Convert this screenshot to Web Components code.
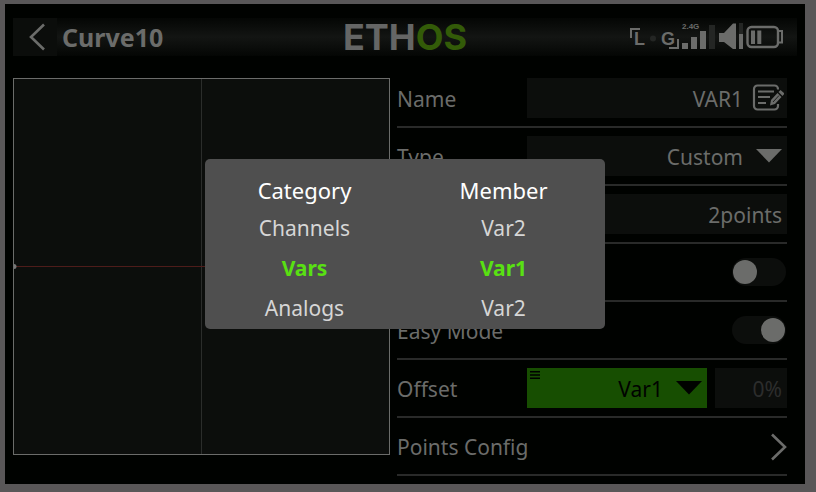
<!DOCTYPE html>
<html lang="en">
<head>
<meta charset="utf-8">
<title>Curve10</title>
<style>
    body {
        margin: 0;
        min-height: 100vh;
        display: flex;
        background: #595758;
        --text: #6b6c6a;
        --line: #292a29;
        --field: #0c0e0c;
        --green: #174e01;
        font: 21px/28px "Noto Sans", "Open Sans", sans-serif;
        color: var(--text);
    }
</style>
</head>
<body>
<ethos-screen>
    <ethos-header slot="header" title-text="Curve10"></ethos-header>
    <curve-chart slot="chart"></curve-chart>
    <text-row label="Name" value="VAR1" icon></text-row>
    <select-row label="Type" value="Custom"></select-row>
    <text-row hint="Points count" value="2points"></text-row>
    <switch-row hint="Smooth"></switch-row>
    <switch-row label="Easy Mode" checked></switch-row>
    <offset-row label="Offset" value="Var1" percent="0%"></offset-row>
    <link-row label="Points Config"></link-row>
    <source-dialog slot="dialog">
        <picker-column heading="Category" items="Channels,Vars,Analogs" selected="1"></picker-column>
        <picker-column heading="Member" items="Var2,Var1,Var2" selected="1"></picker-column>
    </source-dialog>
</ethos-screen>

<script>
    class EthosScreen extends HTMLElement {
        constructor() {
            super();
            this.attachShadow({ mode: "open" });
            this.shadowRoot.innerHTML = `
            <style>
                :host {
                    flex: 1;
                    min-width: 0;
                    position: relative;
                    display: block;
                    margin: 4px 11px 8px 5px;
                    background: #000200;
                }

                main {
                    display: grid;
                    grid-template-columns: minmax(0, 377fr) minmax(0, 390fr);
                    align-items: start;
                    gap: 7px;
                    padding: 0 18px 8px 8px;
                }

                .chart {
                    padding-top: 8px;
                }
            </style>
            <slot name="header"></slot>
            <main>
                <div class="chart"><slot name="chart"></slot></div>
                <div class="rows"><slot></slot></div>
            </main>
            <slot name="dialog"></slot>
        `;
        }
    }

    class EthosHeader extends HTMLElement {
        constructor() {
            super();
            this.attachShadow({ mode: "open" });
            this.shadowRoot.innerHTML = `
            <style>
                :host {
                    display: block;
                    padding: 14px 8px;
                }

                header {
                    display: grid;
                    grid-template-columns: 1fr auto 1fr;
                    align-items: center;
                    height: 38px;
                    background: linear-gradient(#040604, #131513 50%, #040604);
                }

                .left {
                    display: flex;
                    align-items: center;
                    gap: 5px;
                }

                button {
                    width: 44px;
                    height: 38px;
                    padding: 0;
                    border: none;
                    background: #0b0d0b;
                    color: inherit;
                }

                svg {
                    display: block;
                }

                button svg {
                    margin-left: 15px;
                }

                h1 {
                    margin: 0;
                    font-size: 25px;
                    font-weight: 700;
                }

                .logo {
                    font: 700 36px/38px Inter, sans-serif;
                    color: #656665;
                }

                .logo span {
                    color: #335b08;
                }

                .status {
                    justify-self: end;
                    padding-right: 9px;
                }
            </style>
            <header>
                <div class="left">
                    <button aria-label="Back">
                        <svg width="18" height="28" viewBox="0 0 18 28" fill="none" stroke="currentColor" stroke-width="2.6">
                            <path d="M16 1.500L3 14l13 12.500"/>
                        </svg>
                    </button>
                    <h1></h1>
                </div>
                <div class="logo">ETH<span>OS</span></div>
                <svg class="status" width="160" height="36" viewBox="0 0 160 36" fill="#6b6c6a" font-family="Liberation Sans, sans-serif" font-weight="700">
                    <path d="M3 19v-9h9M41 29h9v-9" fill="none" stroke="#6b6c6a" stroke-width="2"/>
                    <text x="6" y="26" font-size="18">L</text>
                    <circle cx="25" cy="19.500" r="3" fill="#242624"/>
                    <text x="33" y="26" font-size="18">G</text>
                    <text x="54" y="10" font-size="8">2.4G</text>
                    <path d="M54 24h6v6h-6zM63 18h6v12h-6zM72 12h6v18h-6z"/>
                    <path d="M81 6h6v24h-6zM111 4h4v11h-4z" fill="#242624"/>
                    <path d="M91 14h5l9-9.500h3V30h-3l-9-7h-5zM111 15h4v15h-4z"/>
                    <rect x="119.500" y="8" width="30.500" height="20" rx="4" fill="none" stroke="#6b6c6a" stroke-width="2.400"/>
                    <path d="M150 12h4v11.500h-4" fill="none" stroke="#6b6c6a" stroke-width="2"/>
                    <path d="M123 11.500h4V25h-4zM129.300 11.500h4V25h-4z"/>
                </svg>
            </header>
        `;
        }

        connectedCallback() {
            this.shadowRoot.querySelector("h1").textContent = this.getAttribute("title-text");
        }
    }

    class CurveChart extends HTMLElement {
        constructor() {
            super();
            this.attachShadow({ mode: "open" });
            this.shadowRoot.innerHTML = `
            <style>
                :host {
                    display: block;
                    box-sizing: border-box;
                    aspect-ratio: 1;
                    border: 1px solid #6b6c6a;
                    background: var(--field);
                }

                svg {
                    display: block;
                    width: 100%;
                    height: 100%;
                }
            </style>
            <svg viewBox="0 0 375 375">
                <path d="M187.500 0v375" stroke="#2b2d2b"/>
                <path d="M0 187.500h375" stroke="#4e1c1a"/>
                <circle cx="0" cy="187.500" r="2.500" fill="#777"/>
            </svg>
        `;
        }
    }

    // Shared look of one settings line: label on the left, control on the right
    class SettingRow extends HTMLElement {
        constructor() {
            super();
            this.attachShadow({ mode: "open" });
        }

        connectedCallback() {
            this.shadowRoot.innerHTML = `
            <style>
                :host {
                    display: block;
                    padding: 8px 0;
                    border-bottom: 2px solid var(--line);
                }

                .row {
                    display: grid;
                    grid-template-columns: minmax(0, 1fr) minmax(0, 2fr);
                    align-items: center;
                    height: 40px;
                }

                .control {
                    position: relative;
                    display: flex;
                    gap: 8px;
                    justify-content: flex-end;
                }

                label {
                    padding-top: 2px;
                    white-space: nowrap;
                }

                input, select, button {
                    box-sizing: border-box;
                    margin: 0;
                    border: none;
                    border-radius: 0;
                    font: inherit;
                    color: inherit;
                }

                input[type="text"], select {
                    appearance: none;
                    flex: 1;
                    width: 100%;
                    min-width: 0;
                    height: 40px;
                    padding: 2px 5px 0;
                    background: var(--field);
                    text-align: right;
                    text-align-last: right;
                }

                .with-icon {
                    padding-right: 44px !important;
                }

                svg {
                    display: block;
                    pointer-events: none;
                }

                .icon {
                    position: absolute;
                    right: 3px;
                    top: 6px;
                }

                .arrow {
                    position: absolute;
                    right: 5px;
                    top: 13px;
                }
            </style>
            ${this.render()}
        `;
        }

        row(control) {
            const name = this.getAttribute("label");
            const label = name ? `<label for="field">${name}</label>` : "<span></span>";
            return `<div class="row">${label}<div class="control">${control}</div></div>`;
        }

        get hint() {
            const hint = this.getAttribute("hint");
            return hint ? `aria-label="${hint}"` : "";
        }

        get arrow() {
            return `<svg class="arrow" width="26" height="14" viewBox="0 0 26 14"><path d="M0 0h26L13 13.500z" fill="currentColor"/></svg>`;
        }
    }

    class TextRow extends SettingRow {
        render() {
            const icon = this.hasAttribute("icon");
            return this.row(`
                <input id="field" type="text" ${this.hint} class="${icon ? "with-icon" : ""}" value="${this.getAttribute("value")}">
                ${icon ? `
                <svg class="icon" width="32" height="28" viewBox="0 0 32 28" fill="none" stroke="currentColor" stroke-width="2.2">
                    <path d="M26 5.500V5a3.500 3.500 0 0 0-3.500-3.500h-17A3.500 3.500 0 0 0 2 5v17a3.500 3.500 0 0 0 3.500 3.500h17A3.500 3.500 0 0 0 26 22v-2"/>
                    <path d="M6 7.500h16M6 13h12M6 19h8" stroke-width="2"/>
                    <path d="M18 21.500l1-5.500 6.500-7 4 4-6.500 7zM26.500 8l2-2 4 3.500-2 2.500z" fill="currentColor" stroke="none"/>
                    <path d="M21 18l6-6.500" stroke="#0c0e0c" stroke-width=".8"/>
                </svg>` : ""}
            `);
        }
    }

    class SelectRow extends SettingRow {
        render() {
            return this.row(`
                <select id="field" class="with-icon"><option>${this.getAttribute("value")}</option></select>
                ${this.arrow}
            `);
        }
    }

    class SwitchRow extends SettingRow {
        render() {
            return `
            <style>
                input {
                    appearance: none;
                    display: flex;
                    width: 54px;
                    height: 28px;
                    padding: 2px 1px;
                    background: var(--field);
                }

                input[type="checkbox"] {
                    margin: 0 1px 0 0;
                    border-radius: 14px;
                }

                input::before {
                    content: "";
                    width: 24px;
                    height: 24px;
                    border-radius: 50%;
                    background: var(--text);
                }

                input:checked {
                    justify-content: flex-end;
                }
            </style>
            ${this.row(`<input id="field" type="checkbox" ${this.hint} ${this.hasAttribute("checked") ? "checked" : ""}>`)}
            `;
        }
    }

    class OffsetRow extends SettingRow {
        render() {
            return `
            <style>
                .source {
                    position: relative;
                    flex: 5;
                    min-width: 0;
                    display: flex;
                    color: #000200;
                }

                .source select {
                    background: var(--green);
                }

                .menu {
                    position: absolute;
                    left: 3px;
                    top: 3px;
                }

                .percent {
                    flex: 2;
                    min-width: 0;
                    display: flex;
                    color: #2c2d2c;
                }
            </style>
            ${this.row(`
                <div class="source">
                    <select id="field" class="with-icon"><option>${this.getAttribute("value")}</option></select>
                    <svg class="menu" width="10" height="8" viewBox="0 0 10 8"><path d="M0 0h10v1.500H0zM0 3.200h10v1.500H0zM0 6.500h10V8H0z"/></svg>
                    ${this.arrow}
                </div>
                <div class="percent"><input type="text" aria-label="Offset value" disabled value="${this.getAttribute("percent")}"></div>
            `)}
            `;
        }
    }

    class LinkRow extends SettingRow {
        render() {
            return `
            <style>
                button {
                    display: flex;
                    align-items: center;
                    justify-content: space-between;
                    width: 100%;
                    height: 40px;
                    padding: 2px 0 0;
                    background: none;
                }
            </style>
            <button>${this.getAttribute("label")}
                <svg width="18" height="28" viewBox="0 0 18 28" fill="none" stroke="currentColor" stroke-width="2.6"><path d="M3 1.500L16 14 3 26.500"/></svg>
            </button>
            `;
        }
    }

    class SourceDialog extends HTMLElement {
        constructor() {
            super();
            this.attachShadow({ mode: "open" });
            this.shadowRoot.innerHTML = `
            <style>
                :host {
                    position: absolute;
                    inset: 0;
                    display: grid;
                    place-items: center;
                }

                .panel {
                    box-sizing: border-box;
                    display: grid;
                    grid-template-columns: 1fr 1fr;
                    width: 50%;
                    padding: 14px 2px 1px 0;
                    border-radius: 5px;
                    background: #4f4f4f;
                }
            </style>
            <div class="panel" role="dialog" aria-label="Source"><slot></slot></div>
        `;
        }
    }

    class PickerColumn extends HTMLElement {
        constructor() {
            super();
            this.attachShadow({ mode: "open" });
        }

        connectedCallback() {
            this.items = this.getAttribute("items").split(",");
            this.shadowRoot.innerHTML = `
            <style>
                :host {
                    display: flex;
                    flex-direction: column;
                    text-align: center;
                }

                h2 {
                    margin: 0;
                    font-size: 22px;
                    font-weight: 400;
                    line-height: 35px;
                    color: #fff;
                }

                button {
                    height: 40px;
                    padding: 0;
                    border: none;
                    background: none;
                    font: inherit;
                    color: #d6d6d6;
                }

                button[aria-pressed="true"] {
                    font-weight: 700;
                    color: #59e012;
                }
            </style>
            <h2>${this.getAttribute("heading")}</h2>
            ${this.items.map((item) => `<button>${item}</button>`).join("")}
        `;
            this.buttons = [...this.shadowRoot.querySelectorAll("button")];
            this.buttons.forEach((button, i) => {
                button.addEventListener("click", () => this.select(i));
            });
            this.select(parseInt(this.getAttribute("selected")) || 0);
        }

        select(index) {
            this.buttons.forEach((button, i) => {
                button.setAttribute("aria-pressed", i === index);
            });
        }
    }

    customElements.define("ethos-screen", EthosScreen);
    customElements.define("ethos-header", EthosHeader);
    customElements.define("curve-chart", CurveChart);
    customElements.define("text-row", TextRow);
    customElements.define("select-row", SelectRow);
    customElements.define("switch-row", SwitchRow);
    customElements.define("offset-row", OffsetRow);
    customElements.define("link-row", LinkRow);
    customElements.define("source-dialog", SourceDialog);
    customElements.define("picker-column", PickerColumn);
</script>
</body>
</html>
